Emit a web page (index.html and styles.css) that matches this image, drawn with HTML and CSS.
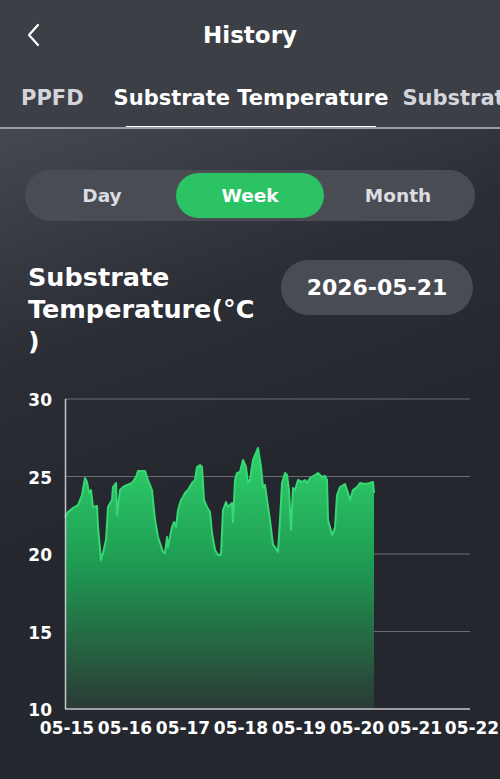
FILE: index.html
```html
<!DOCTYPE html>
<html lang="en">

<head>
    <meta charset="UTF-8">
    <meta name="viewport" content="width=device-width, initial-scale=1.0">
    <title>History</title>
    <link rel="stylesheet" href="styles.css">
</head>

<body>
    <div class="top">
        <div class="navbar">
            <span class="back">
                <svg width="16" height="24" viewBox="0 0 16 24"><path d="M12 2 L3 12 L12 22" fill="none" stroke="#fff" stroke-width="2.2" stroke-linecap="round" stroke-linejoin="round"/></svg>
            </span>
            <h1>History</h1>
        </div>
        <div class="tabs">
            <span class="tab">PPFD</span>
            <span class="tab active">Substrate Temperature</span>
            <span class="tab">Substrate EC</span>
        </div>
    </div>

    <div class="content">
        <div class="segment">
            <span class="seg-item">Day</span>
            <span class="seg-item active">Week</span>
            <span class="seg-item">Month</span>
        </div>

        <div class="title-row">
            <h2>Substrate Temperature(°C )</h2>
            <span class="date-pill">2026-05-21</span>
        </div>

        <svg class="chart" width="500" height="360" viewBox="0 385 500 360">
            <defs>
                <linearGradient id="fillGrad" x1="0" y1="0" x2="0" y2="1" gradientUnits="objectBoundingBox">
                    <stop offset="0" stop-color="#2ed26c"/>
                    <stop offset="0.45" stop-color="#1f9a52"/>
                    <stop offset="1" stop-color="#2a3a35"/>
                </linearGradient>
            </defs>
            <g class="grid">
                <line x1="65" y1="399" x2="470" y2="399"/>
                <line x1="65" y1="476.5" x2="470" y2="476.5"/>
                <line x1="65" y1="554" x2="470" y2="554"/>
                <line x1="65" y1="631.5" x2="470" y2="631.5"/>
            </g>
            <path fill="url(#fillGrad)" d="M65 517 L68 512 L73 508 L78 505 L82 495 L85 478 L87 482 L89 493 L91 490 L93 507 L97 506 L98 527 L101 560 L103 553 L106 540 L108 507 L112 500 L113 487 L116 483 L117 515 L120 490 L123 487 L127 485 L132 483 L136 477 L138 471 L145 471 L148 480 L152 490 L155 520 L158 537 L163 552 L165 553 L167 537 L168 547 L172 527 L174 522 L176 527 L178 510 L181 500 L183 497 L185 493 L188 490 L192 483 L195 480 L197 467 L200 465 L202 467 L204 500 L207 507 L210 512 L212 533 L215 550 L218 555 L221 555 L223 510 L226 502 L228 507 L232 503 L233 522 L235 480 L237 473 L240 472 L243 460 L246 467 L248 483 L250 480 L253 460 L258 448 L261 467 L263 487 L265 485 L267 500 L270 520 L273 545 L275 547 L278 552 L280 520 L282 483 L285 473 L287 475 L289 490 L291 530 L293 488 L295 490 L298 480 L302 482 L305 480 L307 483 L310 478 L315 475 L318 473 L322 477 L325 476 L327 480 L328 520 L332 535 L335 528 L337 495 L340 487 L345 484 L348 493 L350 500 L353 490 L357 487 L360 483 L365 484 L370 483 L373 482 L374 493 L374 709 L65 709 Z"/>
            <path class="line" d="M65 517 L68 512 L73 508 L78 505 L82 495 L85 478 L87 482 L89 493 L91 490 L93 507 L97 506 L98 527 L101 560 L103 553 L106 540 L108 507 L112 500 L113 487 L116 483 L117 515 L120 490 L123 487 L127 485 L132 483 L136 477 L138 471 L145 471 L148 480 L152 490 L155 520 L158 537 L163 552 L165 553 L167 537 L168 547 L172 527 L174 522 L176 527 L178 510 L181 500 L183 497 L185 493 L188 490 L192 483 L195 480 L197 467 L200 465 L202 467 L204 500 L207 507 L210 512 L212 533 L215 550 L218 555 L221 555 L223 510 L226 502 L228 507 L232 503 L233 522 L235 480 L237 473 L240 472 L243 460 L246 467 L248 483 L250 480 L253 460 L258 448 L261 467 L263 487 L265 485 L267 500 L270 520 L273 545 L275 547 L278 552 L280 520 L282 483 L285 473 L287 475 L289 490 L291 530 L293 488 L295 490 L298 480 L302 482 L305 480 L307 483 L310 478 L315 475 L318 473 L322 477 L325 476 L327 480 L328 520 L332 535 L335 528 L337 495 L340 487 L345 484 L348 493 L350 500 L353 490 L357 487 L360 483 L365 484 L370 483 L373 482 L374 493"/>
            <g class="axis">
                <line x1="65.5" y1="399" x2="65.5" y2="709"/>
                <line x1="65" y1="709" x2="470" y2="709"/>
            </g>
            <g class="y-labels">
                <text x="52" y="406">30</text>
                <text x="52" y="484">25</text>
                <text x="52" y="561">20</text>
                <text x="52" y="639">15</text>
                <text x="52" y="716">10</text>
            </g>
            <g class="x-labels">
                <text x="67" y="734">05-15</text>
                <text x="125" y="734">05-16</text>
                <text x="183" y="734">05-17</text>
                <text x="241" y="734">05-18</text>
                <text x="299" y="734">05-19</text>
                <text x="357" y="734">05-20</text>
                <text x="415" y="734">05-21</text>
                <text x="472" y="734">05-22</text>
            </g>
        </svg>
    </div>
</body>

</html>
```
FILE: styles.css
```css
html,
body {
    margin: 0;
    padding: 0;
}

body {
    width: 500px;
    height: 779px;
    overflow: hidden;
    font-family: "DejaVu Sans", "Liberation Sans", sans-serif;
    color: #fff;
    background: #25272f;
}

.top {
    background: #3d3f47;
    border-bottom: 2px solid #9a9da5;
}

.navbar {
    position: relative;
    height: 70px;
    display: flex;
    align-items: center;
    justify-content: center;
}

.back {
    position: absolute;
    left: 26px;
    top: 23px;
    height: 24px;
}

.navbar h1 {
    margin: 0;
    font-size: 23px;
    font-weight: 700;
}

.tabs {
    display: flex;
    padding-left: 21px;
    height: 57px;
    white-space: nowrap;
    overflow: hidden;
}

.tab {
    position: relative;
    font-size: 21px;
    font-weight: 700;
    color: #d4d5da;
    line-height: 57px;
    margin-right: 30px;
}

.tab.active {
    color: #fff;
    margin-right: 14px;
}

.tab.active::after {
    content: "";
    position: absolute;
    left: 12px;
    right: 12px;
    bottom: -1px;
    height: 2px;
    background: #fff;
}

.content {
    background: linear-gradient(160deg, #464851 0%, #2c2e36 30%, #25272f 55%);
    padding-top: 41px;
}

.segment {
    display: flex;
    margin: 0 25px;
    height: 51px;
    padding: 3px;
    box-sizing: border-box;
    background: #4a4c54;
    border-radius: 26px;
}

.seg-item {
    flex: 1;
    display: flex;
    align-items: center;
    justify-content: center;
    font-size: 18.5px;
    font-weight: 700;
    color: #dcdde2;
    border-radius: 23px;
}

.seg-item.active {
    background: #2bc364;
    color: #fff;
}

.title-row {
    display: flex;
    justify-content: space-between;
    align-items: flex-start;
    padding: 39px 27px 0 28px;
}

.title-row h2 {
    margin: 0;
    width: 245px;
    font-size: 25.5px;
    line-height: 32px;
    font-weight: 700;
    margin-top: 1px;
}

.date-pill {
    display: flex;
    align-items: center;
    justify-content: center;
    flex-shrink: 0;
    width: 192px;
    height: 55px;
    background: #4a4c54;
    border-radius: 28px;
    font-size: 22px;
    font-weight: 700;
}

.chart {
    display: block;
    margin-top: 28px;
}

.grid line {
    stroke: #6b6d74;
    stroke-width: 1;
}

.axis line {
    stroke: #c5c6cb;
    stroke-width: 1.5;
}

.line {
    fill: none;
    stroke: #36d873;
    stroke-width: 2;
    stroke-linejoin: round;
}

.y-labels text {
    fill: #fff;
    font-size: 17px;
    font-weight: 700;
    text-anchor: end;
}

.x-labels text {
    fill: #fff;
    font-size: 17px;
    font-weight: 700;
    text-anchor: middle;
}
```
